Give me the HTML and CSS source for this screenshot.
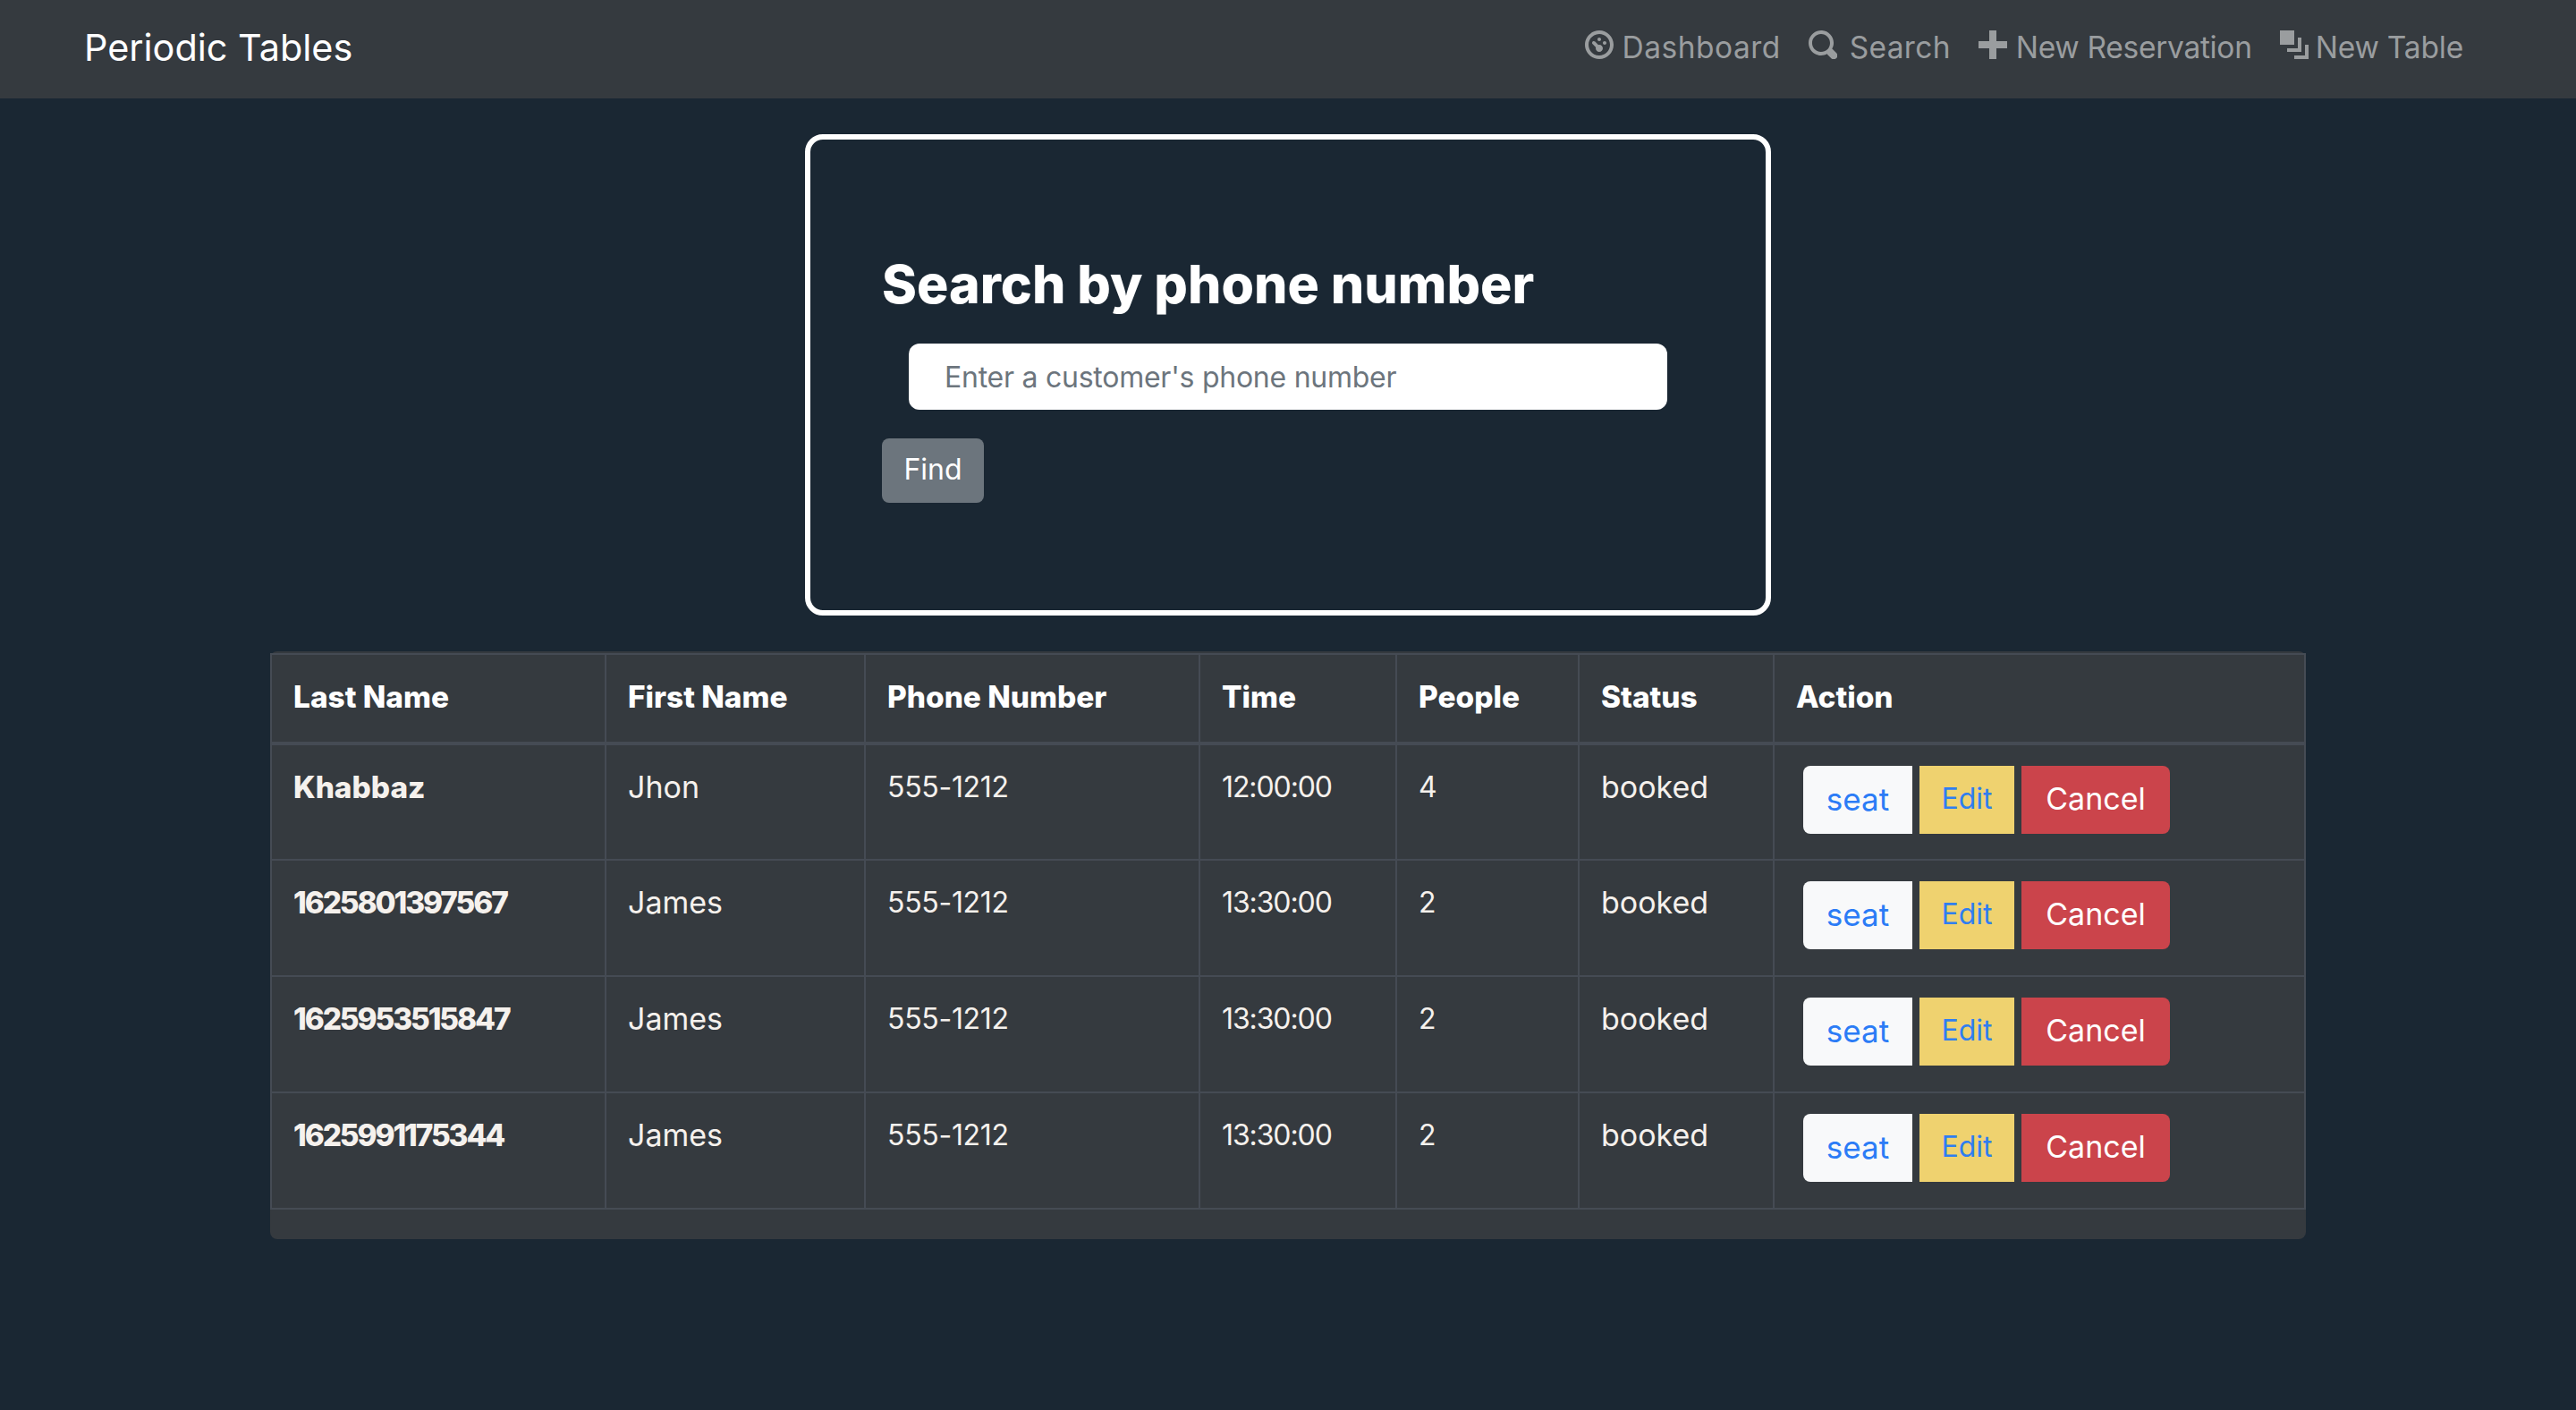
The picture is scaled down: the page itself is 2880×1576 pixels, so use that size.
FILE: index.html
```html
<!DOCTYPE html>
<html lang="en">
<head>
<meta charset="utf-8">
<title>Periodic Tables</title>
<link rel="stylesheet" href="styles.css">
</head>
<body>
<nav class="navbar">
  <a class="brand" href="#">Periodic Tables</a>
  <div class="nav-links">
    <a class="nav-link" href="#"><svg class="icon" viewBox="0 0 8 8"><path d="M4 0c-2.2 0-4 1.8-4 4s1.8 4 4 4 4-1.8 4-4-1.8-4-4-4zm0 1c1.66 0 3 1.34 3 3s-1.34 3-3 3-3-1.34-3-3 1.34-3 3-3zm0 1c-.28 0-.5.22-.5.5s.22.5.5.5.5-.22.5-.5-.22-.5-.5-.5zm-1.66 1a.5.5 0 0 0-.19.84l.91.91c-.02.08-.06.16-.06.25 0 .55.45 1 1 1s1-.45 1-1-.45-1-1-1c-.09 0-.17.04-.25.06l-.91-.91a.5.5 0 0 0-.44-.16.5.5 0 0 0-.06 0zm3.16 0c-.28 0-.5.22-.5.5s.22.5.5.5.5-.22.5-.5-.22-.5-.5-.5z"/></svg><span class="nav-text nl-dash">Dashboard</span></a>
    <a class="nav-link nav-link-search" href="#"><svg class="icon" viewBox="0 0 8 8"><path d="M3.5 0c-1.93 0-3.5 1.57-3.5 3.5s1.57 3.5 3.5 3.5c.59 0 1.17-.14 1.66-.41a1 1 0 0 0 .13.13l1 1a1.02 1.02 0 1 0 1.44-1.44l-1-1a1 1 0 0 0-.16-.13c.27-.49.44-1.06.44-1.66 0-1.93-1.57-3.5-3.5-3.5zm0 1c1.39 0 2.5 1.11 2.5 2.5 0 .66-.24 1.27-.66 1.72-.01.01-.02.02-.03.03a1 1 0 0 0-.13.13c-.44.4-1.04.63-1.69.63-1.39 0-2.5-1.11-2.5-2.5s1.11-2.5 2.5-2.5z"/></svg><span class="nav-text nl-search">Search</span></a>
    <a class="nav-link" href="#"><svg class="icon" viewBox="0 0 8 8"><path d="M3 0v3h-3v2h3v3h2v-3h3v-2h-3v-3h-2z"/></svg><span class="nav-text nl-res">New Reservation</span></a>
    <a class="nav-link nav-link-table" href="#"><svg class="icon" viewBox="0 0 8 8"><path d="M0 0v4h4v-4h-4zm5 2v3h-3v1h4v-4h-1zm2 2v3h-3v1h4v-4h-1z"/></svg><span class="nav-text nl-table">New Table</span></a>
  </div>
</nav>
<main class="main">
  <section class="search-card">
    <h2 class="search-title">Search by phone number</h2>
    <input class="search-input" type="text" placeholder="Enter a customer's phone number">
    <button class="find-btn" type="button">Find</button>
  </section>
  <section class="table-wrap">
    <table class="res-table">
      <thead>
        <tr><th>Last Name</th><th>First Name</th><th>Phone Number</th><th>Time</th><th>People</th><th>Status</th><th>Action</th></tr>
      </thead>
      <tbody>
        <tr><th class="row-head">Khabbaz</th><td class="cell-text">Jhon</td><td class="cell-phone">555-1212</td><td class="cell-time">12:00:00</td><td>4</td><td class="cell-text">booked</td><td class="actions"><div class="btn-row"><button class="btn btn-seat">seat</button><button class="btn btn-edit">Edit</button><button class="btn btn-cancel">Cancel</button></div></td></tr>
        <tr><th class="row-head row-id">1625801397567</th><td class="cell-text">James</td><td class="cell-phone">555-1212</td><td class="cell-time">13:30:00</td><td>2</td><td class="cell-text">booked</td><td class="actions"><div class="btn-row"><button class="btn btn-seat">seat</button><button class="btn btn-edit">Edit</button><button class="btn btn-cancel">Cancel</button></div></td></tr>
        <tr><th class="row-head row-id">1625953515847</th><td class="cell-text">James</td><td class="cell-phone">555-1212</td><td class="cell-time">13:30:00</td><td>2</td><td class="cell-text">booked</td><td class="actions"><div class="btn-row"><button class="btn btn-seat">seat</button><button class="btn btn-edit">Edit</button><button class="btn btn-cancel">Cancel</button></div></td></tr>
        <tr><th class="row-head row-id">1625991175344</th><td class="cell-text">James</td><td class="cell-phone">555-1212</td><td class="cell-time">13:30:00</td><td>2</td><td class="cell-text">booked</td><td class="actions"><div class="btn-row"><button class="btn btn-seat">seat</button><button class="btn btn-edit">Edit</button><button class="btn btn-cancel">Cancel</button></div></td></tr>
      </tbody>
    </table>
  </section>
</main>
</body>
</html>
```
FILE: styles.css
```css
* { box-sizing: border-box; }
html, body { margin: 0; padding: 0; }
body {
  background: #1a2733;
  color: #f5f1ed;
  font-family: Inter, "Liberation Sans", sans-serif;
  font-size: 32px;
  min-height: 1576px;
}
a { text-decoration: none; }

.navbar {
  height: 110px;
  background: #353a3f;
  display: flex;
  align-items: center;
  justify-content: space-between;
  padding: 0 126px 0 94px;
}
.brand { color: #fff; font-size: 41.4px; line-height: 60px; white-space: nowrap; margin-top: -4px; }
.nav-links { display: flex; align-items: center; gap: 31px; margin-top: -8px; }
.nav-link { display: flex; align-items: center; gap: 10px; color: #9a9d9f; font-size: 33.5px; line-height: 48px; white-space: nowrap; }
.nav-link-search { gap: 14px; }
.nav-link-table { gap: 8px; }
.nav-text { margin-top: 4px; }
.nl-dash { letter-spacing: 0.5px; }
.nl-search { letter-spacing: 0.3px; }
.nl-res { letter-spacing: -0.3px; }
.nl-table { letter-spacing: -0.2px; }
.icon { width: 32px; height: 32px; margin-top: -2px; fill: #9a9d9f; flex: none; }

.main { display: flex; flex-direction: column; align-items: center; }

.search-card {
  width: 1080px;
  height: 538px;
  margin-top: 40px;
  border: 6px solid #fff;
  border-radius: 20px;
  padding: 126px 80px 0;
  display: flex;
  flex-direction: column;
  align-items: flex-start;
}
.search-title { margin: 0; color: #fff; font-size: 59px; line-height: 72px; font-weight: 800; white-space: nowrap; }
.search-input {
  width: 848px;
  height: 74px;
  margin: 30px 0 0 30px;
  padding: 0 40px;
  border: 0;
  border-radius: 12px;
  background: #fff;
  font: 32px Inter, "Liberation Sans", sans-serif;
  letter-spacing: -0.25px;
  color: #333;
}
.search-input::placeholder { color: #6c757d; opacity: 1; }
.find-btn {
  width: 114px;
  height: 72px;
  margin-top: 32px;
  padding: 0 0 4px;
  border: 0;
  border-radius: 8px;
  background: #6c757d;
  color: #fff;
  font: 32px Inter, "Liberation Sans", sans-serif;
}

.table-wrap {
  width: 2276px;
  height: 657px;
  margin-top: 40px;
  background: #353a3f;
  border-radius: 8px;
  padding: 2px 0 0;
}
.res-table {
  width: 2276px;
  border-collapse: collapse;
  table-layout: fixed;
  font-size: 32px;
}
.res-table th, .res-table td {
  border: 2px solid #454b54;
  padding: 23px 24px 23px;
  line-height: 48px;
  text-align: left;
  vertical-align: top;
  white-space: nowrap;
}
.res-table thead th { color: #fff; font-size: 33.4px; font-weight: 800; border-bottom-width: 4px; height: 100px; }
.res-table .row-head { font-size: 33.4px; font-weight: 800; }
.res-table .row-id { letter-spacing: -2.1px; }
.res-table .cell-text { font-size: 34px; }
.res-table .cell-phone { letter-spacing: -0.3px; }
.res-table .cell-time { letter-spacing: -1.1px; }
.res-table tbody td, .res-table tbody th { height: 130px; }
.res-table th:nth-child(1) { width: 374px; }
.res-table th:nth-child(2) { width: 290px; }
.res-table th:nth-child(3) { width: 374px; }
.res-table th:nth-child(4) { width: 220px; }
.res-table th:nth-child(5) { width: 204px; }
.res-table th:nth-child(6) { width: 218px; }

.btn-row { display: flex; gap: 8px; margin-left: 8px; }
.btn {
  height: 76px;
  padding: 0 0 3px;
  border: 0;
  font: 32px Inter, "Liberation Sans", sans-serif;
  white-space: nowrap;
}
.btn-seat { width: 122px; font-size: 35px; background: #f8f9fa; color: #2b7cf6; border-radius: 8px 0 0 8px; }
.btn-edit { width: 106px; background: #efd26f; color: #2f7ef0; }
.btn-cancel { width: 166px; font-size: 34px; background: #cb444b; color: #fff; border-radius: 0 8px 8px 0; }
```
